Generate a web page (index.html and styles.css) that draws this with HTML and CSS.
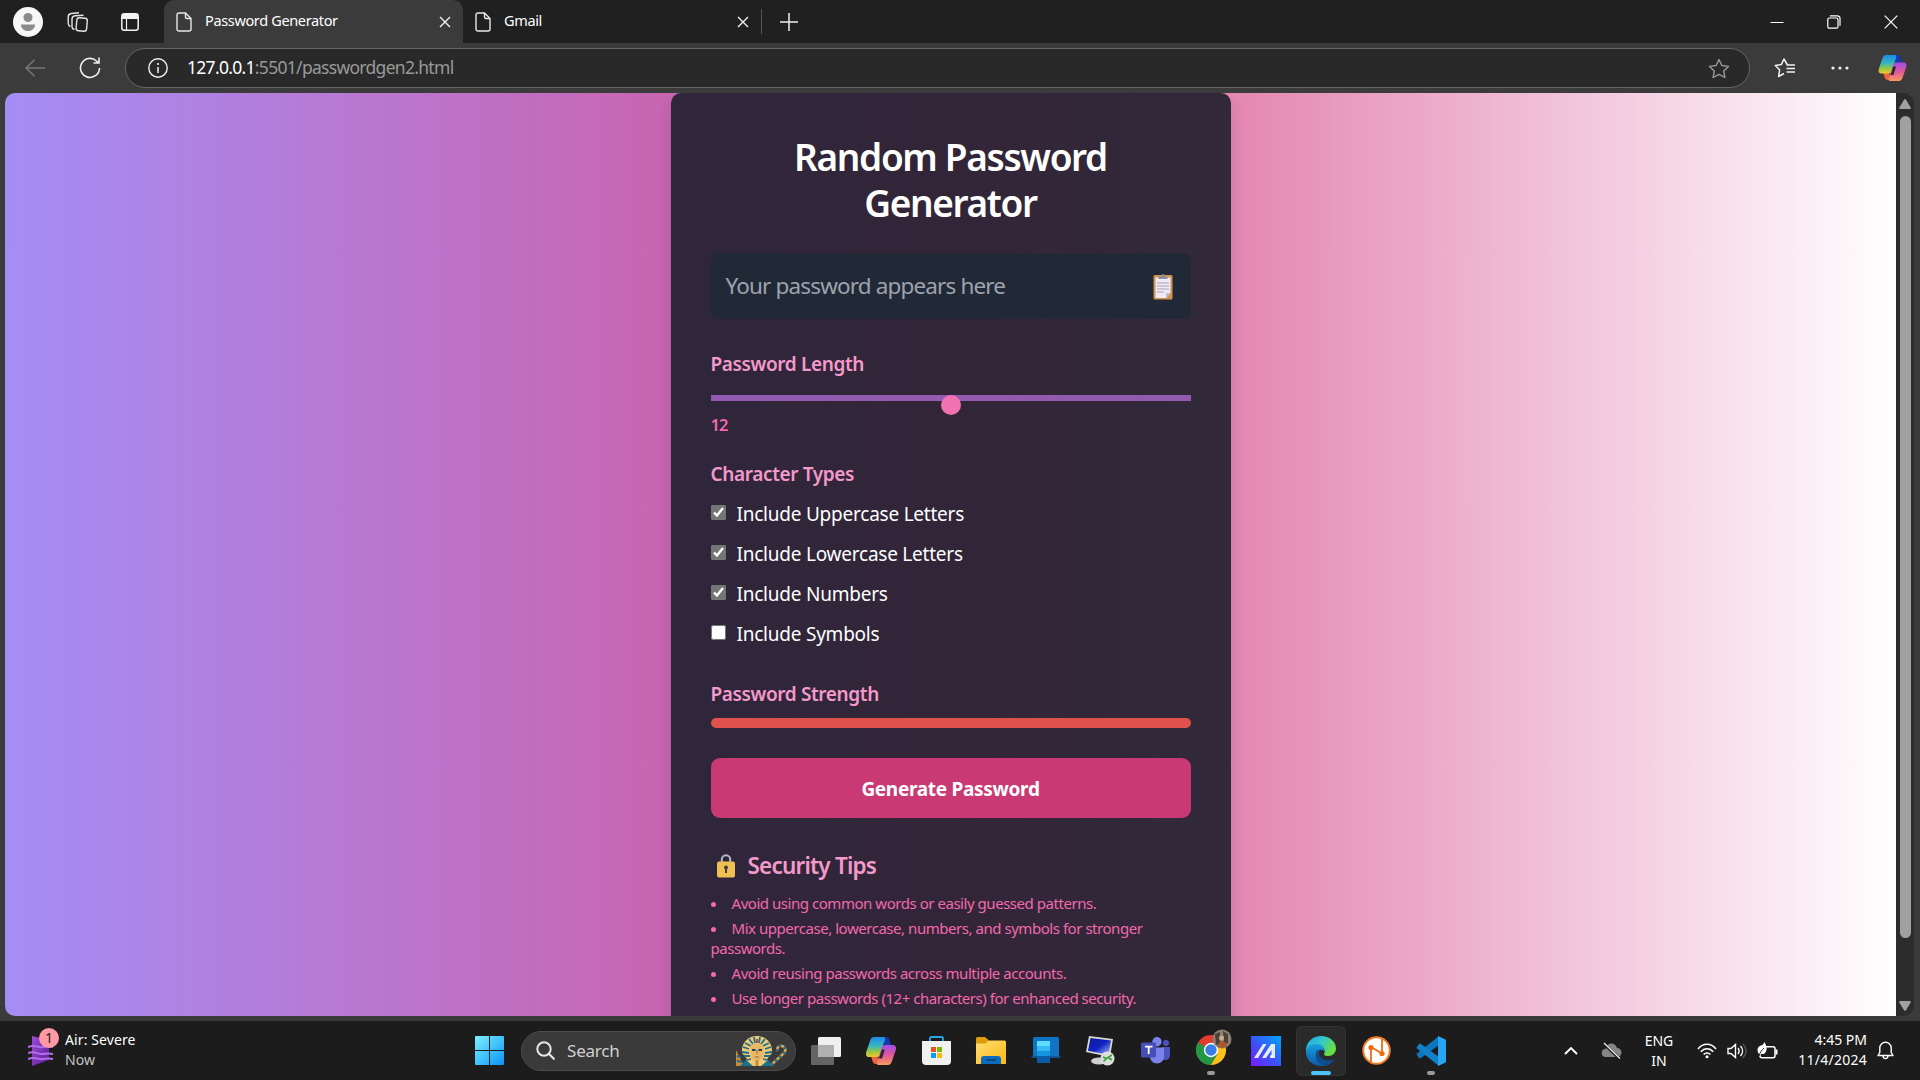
FILE: index.html
```html
<!DOCTYPE html>
<html lang="en">
<head>
<meta charset="utf-8">
<title>Password Generator</title>
<link rel="stylesheet" href="styles.css">
</head>
<body>
<svg class="defs" width="0" height="0">
  <defs>
    <linearGradient id="cpA" x1="0" y1="0" x2="0" y2="1"><stop offset="0" stop-color="#1c8be8"/><stop offset=".45" stop-color="#38b6c0"/><stop offset=".75" stop-color="#9cc93a"/><stop offset="1" stop-color="#f5c52c"/></linearGradient>
    <linearGradient id="cpB" x1="0" y1="0" x2="0" y2="1"><stop offset="0" stop-color="#a24de8"/><stop offset=".5" stop-color="#e0569c"/><stop offset="1" stop-color="#fb9a5a"/></linearGradient>
    <linearGradient id="win" x1="0" y1="0" x2="1" y2="1"><stop offset="0" stop-color="#7cf0ff"/><stop offset="1" stop-color="#0a94f8"/></linearGradient>
    <linearGradient id="fold" x1="0" y1="0" x2="1" y2="1"><stop offset="0" stop-color="#ffdf72"/><stop offset="1" stop-color="#fdb813"/></linearGradient>
    <linearGradient id="edgeA" x1="0" y1="0" x2="1" y2=".5"><stop offset="0" stop-color="#1ba5e8"/><stop offset=".5" stop-color="#32c6d0"/><stop offset="1" stop-color="#66e040"/></linearGradient>
    <linearGradient id="edgeB" x1="0" y1="0" x2="0" y2="1"><stop offset="0" stop-color="#1a9fe0"/><stop offset="1" stop-color="#0c59a4"/></linearGradient>
    <linearGradient id="asus" x1="0" y1="1" x2="1" y2="0"><stop offset="0" stop-color="#7a1cff"/><stop offset=".45" stop-color="#3c50f8"/><stop offset="1" stop-color="#00a8ff"/></linearGradient>
    <linearGradient id="screen" x1="0" y1="0" x2="1" y2="1"><stop offset="0" stop-color="#0a1e9c"/><stop offset=".5" stop-color="#1020c0"/><stop offset="1" stop-color="#a8c0f8"/></linearGradient>
    <linearGradient id="air" x1="0" y1="0" x2="1" y2="1"><stop offset="0" stop-color="#9a4bd8"/><stop offset="1" stop-color="#5c1c96"/></linearGradient>
    <symbol id="copilot" viewBox="0 0 30 28">
      <path d="M16 0h4c2 0 3 1 3.500 3l1.500 5h-6z" fill="#1438b8"/>
      <path d="M14 27h-4c-2 0-3-1-3.500-3L5 19h6z" fill="#f0643c"/>
      <path d="M8 0h9c2 0 2.500 1 2 2.500L14.500 17c-.7 2-1.500 3-3.500 3H3c-2.500 0-3.500-2-2.800-5L4 4C4.800 1.500 6 0 8 0z" fill="url(#cpA)"/>
      <path d="M22 28h-9c-2 0-2.500-1-2-2.500L15.500 11c.7-2 1.500-3 3.500-3h8c2.500 0 3.500 2 2.800 5L26 24c-.8 2.500-2 4-4 4z" fill="url(#cpB)"/>
      <path d="M15.800 12.500h3l-2.800 9h-3z" fill="#2c2430"/>
    </symbol>
    <symbol id="page" viewBox="0 0 16 20"><path d="M2.500 1h7L15 6.500V17a2 2 0 0 1-2 2H3a2 2 0 0 1-2-2V3a2 2 0 0 1 2-2zM9.500 1v4a1.500 1.500 0 0 0 1.500 1.500h4" fill="none" stroke="#e8e8e8" stroke-width="1.400"/></symbol>
    <symbol id="cross" viewBox="0 0 12 12"><path d="M1 1l10 10M11 1L1 11" fill="none" stroke="#f2f2f2" stroke-width="1.400"/></symbol>
  </defs>
</svg>

<header class="tabs">
  <div class="tab-tools">
    <svg width="30" height="30" viewBox="0 0 30 30"><circle cx="15" cy="15" r="15" fill="#f7f7f7"/><circle cx="15" cy="10.500" r="4.500" fill="#8d8b89"/><path d="M8 17.500h14c0 4-3 6.500-7 6.500s-7-2.500-7-6.500z" fill="#8d8b89"/></svg>
    <svg width="22" height="20" viewBox="0 0 22 20" fill="none" stroke="#e4e4e4" stroke-width="1.400"><rect x="9.500" y="6" width="10.500" height="13" rx="2.500" transform="rotate(5 15 12)"/><path d="M7.500 17.500C5.500 17 5 16 5 14.500V7c0-2 1-3 3-3.200l8.500-.6M3.500 14.500C2 14 1.200 13 1.200 11.500V5c0-2.200 1-3.200 3-3.500L12 .8"/></svg>
    <svg width="18" height="18" viewBox="0 0 18 18"><rect x=".8" y=".8" width="16.400" height="16.400" rx="2.500" fill="none" stroke="#f4f4f4" stroke-width="1.500"/><path d="M1 3a2 2 0 0 1 2-2h12a2 2 0 0 1 2 2v3H1z" fill="#f4f4f4"/><path d="M5.500 5v12" stroke="#f4f4f4" stroke-width="1.200"/></svg>
  </div>
  <div class="tab tab-active">
    <svg width="16" height="20"><use href="#page"/></svg><span>Password Generator</span><svg width="12" height="12"><use href="#cross"/></svg>
  </div>
  <div class="tab">
    <svg width="16" height="20"><use href="#page"/></svg><span>Gmail</span><svg width="12" height="12"><use href="#cross"/></svg>
  </div>
  <div class="new-tab"><svg width="18" height="18" viewBox="0 0 18 18"><path d="M9 0v18M0 9h18" stroke="#f0f0f0" stroke-width="1.500"/></svg></div>
  <div class="window-controls">
    <svg width="14" height="14" viewBox="0 0 14 14"><path d="M.5 7.500h13" stroke="#fff"/></svg>
    <svg width="14" height="14" viewBox="0 0 14 14" fill="none" stroke="#fff" stroke-width="1.200"><rect x=".8" y="3" width="10.200" height="10.200" rx="1.500"/><path d="M3 .8h7.500a2.500 2.500 0 0 1 2.500 2.500v7.500"/></svg>
    <svg width="14" height="14" viewBox="0 0 14 14"><path d="M.7.7l12.600 12.600M13.300.7L.7 13.300" stroke="#fff" stroke-width="1.200"/></svg>
  </div>
</header>

<nav class="toolbar">
  <svg class="back" width="20" height="18" viewBox="0 0 20 18"><path d="M20 9H1M9.500.7L1 9l8.500 8.300" fill="none" stroke="#777" stroke-width="1.500"/></svg>
  <svg class="reload" width="22" height="22" viewBox="0 0 22 22"><path d="M20.500 11A9.500 9.500 0 1 1 17.500 4l2 2M20 .5V6h-5.500" fill="none" stroke="#f0f0f0" stroke-width="1.600"/></svg>
  <div class="address">
    <svg width="20" height="20" viewBox="0 0 20 20"><circle cx="10" cy="10" r="9.200" fill="none" stroke="#f0f0f0" stroke-width="1.400"/><path d="M10 9v6" stroke="#f0f0f0" stroke-width="1.500"/><circle cx="10" cy="6" r="1.100" fill="#f0f0f0"/></svg>
    <div class="url">127.0.0.1<span>:5501/passwordgen2.html</span></div>
    <svg width="22" height="21" viewBox="0 0 22 21"><path d="M11 1.500l2.900 6 6.600.9-4.800 4.600 1.200 6.500L11 16.400l-5.900 3.100L6.300 13 1.500 8.400l6.600-.9z" fill="none" stroke="#999" stroke-width="1.400" stroke-linejoin="round"/></svg>
  </div>
  <div class="toolbar-end">
    <svg width="22" height="20" viewBox="0 0 22 20"><path d="M13.500 7L10 1 7.300 6.600l-6 .9 4.300 4.300L4.600 18.500l5.400-3M13.500 7l3 0M12.500 10.500H21M12.500 7H21M12.500 14H21" fill="none" stroke="#f2f2f2" stroke-width="1.500" stroke-linejoin="round"/></svg>
    <svg width="18" height="4" viewBox="0 0 18 4" fill="#f2f2f2"><circle cx="2" cy="2" r="1.600"/><circle cx="9" cy="2" r="1.600"/><circle cx="16" cy="2" r="1.600"/></svg>
    <svg width="29" height="26"><use href="#copilot"/></svg>
  </div>
</nav>

<div class="viewport">
  <main class="page">
    <section class="card">
      <h1>Random Password Generator</h1>
      <div class="output"><span>Your password appears here</span>
        <svg width="20" height="26" viewBox="0 0 20 26"><rect x=".5" y="1" width="19" height="24.500" rx="1.500" fill="#cf934e"/><path d="M2.500 3.500h15V19l-4.500 5H2.500z" fill="#f0eaf6"/><path d="M17.500 19H13v5z" fill="#c5bdd0"/><path d="M5.500 5V2.500h2.500C8 .8 8.800.3 10 .3s2 .5 2 2.200h2.500V5z" fill="#8f8d96"/><path d="M4 9h12M4 12h12M4 15h12M4 18h7" stroke="#aaa4b2" stroke-width="1.100"/></svg>
      </div>
      <div class="label length-label">Password Length</div>
      <div class="slider"><div class="thumb"></div></div>
      <div class="length-value">12</div>
      <div class="label types-label">Character Types</div>
      <div class="options">
        <label><input type="checkbox" checked>Include Uppercase Letters</label>
        <label><input type="checkbox" checked>Include Lowercase Letters</label>
        <label><input type="checkbox" checked>Include Numbers</label>
        <label><input type="checkbox">Include Symbols</label>
      </div>
      <div class="label strength-label">Password Strength</div>
      <div class="strength"></div>
      <button class="generate">Generate Password</button>
      <h2><svg width="20" height="24" viewBox="0 0 20 24"><path d="M5.800 9V5.500a4.200 4.200 0 0 1 8.400 0V9" fill="none" stroke="#b9b7c2" stroke-width="2"/><rect x="1" y="7.500" width="18" height="16" rx="2" fill="#f0c052"/><circle cx="10" cy="13.500" r="2" fill="#44364a"/><path d="M10 14v5" stroke="#44364a" stroke-width="2"/></svg><span>Security Tips</span></h2>
      <ul class="tips">
        <li>Avoid using common words or easily guessed patterns.</li>
        <li>Mix uppercase, lowercase, numbers, and symbols for stronger passwords.</li>
        <li>Avoid reusing passwords across multiple accounts.</li>
        <li>Use longer passwords (12+ characters) for enhanced security.</li>
      </ul>
    </section>
  </main>
  <div class="scrollbar">
    <svg width="12" height="10" viewBox="0 0 12 10"><path d="M5 .8a1.200 1.200 0 0 1 2 0l4.700 7.700a1 1 0 0 1-.9 1.500H1.200a1 1 0 0 1-.9-1.500z" fill="#a0a0a0"/></svg>
    <div class="scroll-thumb"></div>
    <svg width="12" height="10" viewBox="0 0 12 10"><path d="M5 9.200a1.200 1.200 0 0 0 2 0l4.700-7.700A1 1 0 0 0 10.800 0H1.200a1 1 0 0 0-.9 1.500z" fill="#a0a0a0"/></svg>
  </div>
</div>

<footer class="taskbar">
  <div class="weather">
    <div class="weather-icon">
      <svg width="26" height="32" viewBox="0 0 26 32"><path d="M4 1l17 4v20L4 31z" fill="url(#air)"/><path d="M0 12c7-3 10 1 15 0s6-1 10 0M0 18c7-3 10 2 15 1s6-1 10 0M0 24c7-3 10 1 15 0s6-1 10 0" fill="none" stroke="#b070e8" stroke-width="2"/></svg>
      <span class="badge">1</span>
    </div>
    <div class="weather-text"><div>Air: Severe</div><div class="muted">Now</div></div>
  </div>
  <div class="apps">
    <div class="start"><svg width="29" height="29" viewBox="0 0 29 29"><path d="M1 0h13v14H0V1a1 1 0 0 1 1-1zM15 0h13a1 1 0 0 1 1 1v13H15zM0 15h14v14H1a1 1 0 0 1-1-1zM15 15h14v13a1 1 0 0 1-1 1H15z" fill="url(#win)"/></svg></div>
    <div class="search">
      <svg width="19" height="19" viewBox="0 0 19 19"><circle cx="8" cy="8" r="6.700" fill="none" stroke="#e6e6e6" stroke-width="2"/><path d="M12.800 12.800l5 5" stroke="#e6e6e6" stroke-width="2.200" stroke-linecap="round"/></svg>
      <span>Search</span>
      <svg width="52" height="34" viewBox="0 0 52 34">
        <path d="M1 32V16l8 16z" fill="#c98a3c"/><path d="M2 22l4 1M2 27l6 1" stroke="#1b6a86" stroke-width="2"/>
        <path d="M9 32L12 25 7 19c-1-9 5-17 15-17s16 8 15 17l-5 6 3 7z" fill="#f0ca74"/>
        <path d="M8 13l6 2M7 18l7 1M9 22l6 0M12 26l4-1M10 9l6 3M36 13l-6 2M37 18l-7 1M35 22l-6 0M32 26l-4-1M34 9l-6 3M14 5l4 5M30 5l-4 5M19 3l1 6M25 3l-1 6" stroke="#1b7090" stroke-width="1.800"/>
        <path d="M5 32l6-6 7 6zM26 32l7-6 6 6z" fill="#1b7090"/>
        <path d="M15.500 12c4-3 9-3 13 0v8c0 4-3 7-6.500 7s-6.500-3-6.500-7z" fill="#e6b865"/><path d="M17 16h3.500M23.500 16H27" stroke="#19465c" stroke-width="1.800"/><path d="M22 16v4M20 23h4" stroke="#9a6428"/><path d="M20.500 26h3v6h-3z" fill="#c98a3c"/><path d="M21 5h2v4h-2z" fill="#c6452f"/>
        <path d="M36 31l12-11c5-4 1-9-3-8-3 .8-3 3-2 5" fill="none" stroke="#d9a650" stroke-width="2.600"/><path d="M36 31l12-11c5-4 1-9-3-8-3 .8-3 3-2 5" fill="none" stroke="#1b6a86" stroke-width="2.600" stroke-dasharray="2.500 3"/>
      </svg>
    </div>
    <div class="app"><svg width="30" height="28" viewBox="0 0 30 28"><rect y="8" width="23" height="20" rx="1.500" fill="#646464"/><rect x="7" width="23" height="20" rx="1.500" fill="#f0f0f0"/><path d="M7 8h16v12H8.500A1.500 1.500 0 0 1 7 18.500z" fill="#b0b0b0"/></svg></div>
    <div class="app"><svg width="30" height="28"><use href="#copilot"/></svg></div>
    <div class="app"><svg width="29" height="29" viewBox="0 0 29 29"><path d="M8 6V2.500C8 1.500 8.500 1 9.500 1h10c1 0 1.500.5 1.500 1.500V6" fill="none" stroke="#28a8ea" stroke-width="1.800"/><path d="M0 5h29v20a4 4 0 0 1-4 4H4a4 4 0 0 1-4-4z" fill="#f1f1f1"/><path d="M9 11h5v5H9z" fill="#f25022"/><path d="M15 11h5v5h-5z" fill="#7fba00"/><path d="M9 17h5v5H9z" fill="#00a4ef"/><path d="M15 17h5v5h-5z" fill="#ffb900"/></svg></div>
    <div class="app"><svg width="30" height="27" viewBox="0 0 30 27"><path d="M0 1.500A1.500 1.500 0 0 1 1.500 0H9l4 3.500V9H0z" fill="#e09c0a"/><path d="M0 6.500h9.500L13 3.500h15.500A1.500 1.500 0 0 1 30 5v22H0z" fill="url(#fold)"/><path d="M5 27v-5a3 3 0 0 1 3-3h14a3 3 0 0 1 3 3v5z" fill="#0f6cbd"/><path d="M10 23h10" stroke="#0a4a88" stroke-width="2"/></svg></div>
    <div class="app"><svg width="30" height="27" viewBox="0 0 30 27"><rect x="2" y="0" width="26" height="20" rx="1.500" fill="#1173c4"/><path d="M0 19h30l-2 2H2z" fill="#0d5798"/><path d="M6 4h13v22H6z" fill="#0a5ca8"/><path d="M6 4h13v5H6z" fill="#5edcff"/><path d="M6 9h13v5H6z" fill="#35b9f1"/><path d="M6 14h13v5H6z" fill="#1593dc"/></svg></div>
    <div class="app"><svg width="30" height="30" viewBox="0 0 30 30"><ellipse cx="13" cy="25" rx="8" ry="3.500" fill="#d0d0d0"/><path d="M3 0l24 3-3 18L0 16z" fill="#d9d9d0"/><path d="M4.500 2l20.500 2.500-2.500 14.300L2 14.700z" fill="url(#screen)"/><circle cx="21.500" cy="22.500" r="7" fill="#dedede"/><path d="M17 21l3.500 1.500-3 3M26 19l-4 2.500 4 2.500" fill="none" stroke="#37a23a" stroke-width="1.700"/></svg></div>
    <div class="app"><svg width="30" height="27" viewBox="0 0 30 27"><circle cx="25" cy="6" r="3" fill="#4b53bc"/><path d="M21 10h8v8c0 3-2 5-5 5h-3z" fill="#4b53bc"/><circle cx="16" cy="4.700" r="4.700" fill="#7b83eb"/><path d="M9 10.500h14v9c0 4-3 7-7 7s-7-3-7-7z" fill="#7b83eb"/><rect y="5.500" width="15" height="15" rx="1.500" fill="#464eb8"/><path d="M4 9.700h7.500M7.700 9.700V17" stroke="#fff" stroke-width="1.800"/></svg></div>
    <div class="app running"><svg class="chrome" width="38" height="38" viewBox="0 0 38 38"><circle cx="17" cy="21" r="15" fill="#e33b2e"/><path d="M17 21L4 13.500A15 15 0 0 0 17 36l6.500-11z" fill="#229847"/><path d="M17 14h13.300A15 15 0 0 1 17 36l6.500-11z" fill="#fbc116"/><circle cx="17" cy="21" r="7.200" fill="#fff"/><circle cx="17" cy="21" r="5.700" fill="#3a7de8"/><circle cx="28" cy="10" r="9.500" fill="#8c8272"/><path d="M21 5l5-2v12l-4 1zM29 2l5 3v9l-4 1z" fill="#4b4139"/><circle cx="27.500" cy="9" r="2.500" fill="#c3ad94"/><path d="M24 18c0-4 2-6 4-6s5 2 5 5l-4 2z" fill="#ab562c"/></svg></div>
    <div class="app"><svg width="30" height="30" viewBox="0 0 30 30"><path d="M0 0h30v30H0z" fill="url(#asus)"/><path d="M3 22L12 8h3.500L7 22zM11 22l9-14h4v14h-3.500V14L15 22z" fill="#e4ecff"/><circle cx="20.500" cy="20.500" r="1.500" fill="#fff"/></svg></div>
    <div class="app active"><svg width="30" height="30" viewBox="0 0 30 30"><path d="M0 17C-1 7 6 0 15 0c8.500 0 15 5.500 15 12.500 0 4.500-3.500 7.500-7.500 7.500-3.500 0-5-1.200-4.500-2.200 2.500-3-.5-7.800-6-7.800C6 10 1 13 0 17z" fill="url(#edgeA)"/><path d="M0 17C0 11 5 8 10.500 8c6 0 9 4 8 8-1-2-3-2.500-5-2-3 1-4 5-2 9 2 4 6 6.500 9.500 6.500C11 32 1 27 0 17z" fill="url(#edgeB)"/><path d="M10 16c-2 8 3 13.500 11 13.500 3-1 5.500-3.500 7.500-6.500-5 2.500-12.500 1.500-15-3.500-.8-1.700-.5-3.500.5-5.500-2 0-3.500.7-4 2z" fill="#0f4e8c"/></svg></div>
    <div class="app"><svg width="29" height="29" viewBox="0 0 29 29"><circle cx="14.500" cy="14.500" r="13.300" fill="#fff" stroke="#f47b28" stroke-width="2"/><path d="M9 26V11l11 6.500V3" fill="none" stroke="#f26a0d" stroke-width="1.800"/><circle cx="9" cy="11.500" r="2.600" fill="#f26a0d"/><circle cx="20" cy="17.500" r="2.600" fill="#f26a0d"/></svg></div>
    <div class="app running"><svg width="30" height="30" viewBox="0 0 30 30"><path d="M1 19l2 3c.6.500 1.300.5 2 0L23 9V0L1 17.500c-.6.500-.6 1 0 1.500z" fill="#0b76bd"/><path d="M1 11l2-3c.6-.5 1.300-.5 2 0L23 21v9L1 12.500c-.6-.5-.6-1 0-1.500z" fill="#1180c8"/><path d="M22 0l7 3.200c.6.300 1 .8 1 1.500v20.600c0 .7-.4 1.200-1 1.500L22 30z" fill="#27a4f2"/></svg></div>
  </div>
  <div class="tray">
    <svg class="chev" width="14" height="9" viewBox="0 0 14 9"><path d="M1 8l6-6 6 6" fill="none" stroke="#fff" stroke-width="1.900"/></svg>
    <svg class="cloud" width="21" height="17" viewBox="0 0 21 17"><path d="M5 15a4 4 0 0 1-.5-8C5.500 3 8 1.500 10.500 1.500S15 3 16 6a4.500 4.500 0 0 1 0 9z" fill="#858585"/><path d="M2 1l16.500 15.500" stroke="#1c1c1c" stroke-width="3"/><path d="M3 1l16 15.500" stroke="#eee" stroke-width="1.300"/></svg>
    <div class="lang"><div>ENG</div><div>IN</div></div>
    <svg class="wifi" width="20" height="16" viewBox="0 0 20 16" fill="none" stroke="#fff" stroke-width="1.500"><path d="M1 6C6-.2 14-.2 19 6M3.800 8.800c3.500-4.200 9-4.200 12.400 0M6.600 11.600c2-2.300 4.900-2.300 6.800 0"/><circle cx="10" cy="13.800" r="1.500" fill="#fff" stroke="none"/></svg>
    <svg class="sound" width="20" height="16" viewBox="0 0 20 16" fill="none" stroke="#fff" stroke-width="1.400"><path d="M1 5.500h3L8.500 1.500v13L4 10.500H1zM11 5c1.500 2 1.500 4 0 6M13.500 3c2.700 3 2.700 7 0 10"/><path d="M16 1c4 4.500 4 9.500 0 14" stroke="#555"/></svg>
    <svg class="battery" width="21" height="17" viewBox="0 0 21 17"><path d="M9 4.700h7a2 2 0 0 1 2 2v7a2 2 0 0 1-2 2H5a2 2 0 0 1-2-2V12" fill="none" stroke="#fff" stroke-width="1.500"/><path d="M18.500 7.500h2v5h-2z" fill="#fff"/><path d="M7 0c3 3 4 9 0 12H2C-1 8 1 4 4 3.500 6 3 7 2 7 0z" fill="#fff"/><path d="M2 14c1-4 3-6 5-8" stroke="#222" fill="none"/></svg>
    <div class="clock"><div>4:45 PM</div><div class="date">11/4/2024</div></div>
    <svg class="bell" width="17" height="19" viewBox="0 0 17 19"><path d="M1 14.500l1.800-3V7a5.700 5.700 0 0 1 11.400 0v4.500l1.800 3zM6 15c.5 3.500 4.500 3.500 5 0" fill="none" stroke="#fff" stroke-width="1.400" stroke-linejoin="round"/></svg>
  </div>
</footer>
</body>
</html>
```
FILE: styles.css
```css
* { box-sizing: border-box; }
body {
  margin: 0;
  width: 1920px;
  height: 1080px;
  overflow: hidden;
  display: flex;
  flex-direction: column;
  background: #3b3b3b;
  color: #fff;
  font-family: "Noto Sans", "Open Sans", sans-serif;
}
svg { display: block; flex: none; }
.defs { position: absolute; }

.tabs { height: 43px; background: #202020; display: flex; align-items: center; font-size: 14.500px; letter-spacing: -.35px; }
.tab-tools { width: 164px; padding-left: 13px; display: flex; align-items: center; gap: 24px; }
.tab-tools svg:last-child { margin-left: 8px; }
.tab { width: 298px; height: 43px; padding: 0 12px; display: flex; align-items: center; }
.tab span { flex: 1; padding-left: 13px; padding-bottom: 3px; }
.tab-active { width: 299px; background: #3b3b3b; border-radius: 10px 10px 0 0; }
.new-tab { height: 25px; padding-left: 18px; border-left: 1px solid #555; display: flex; align-items: center; }
.window-controls { margin-left: auto; padding-right: 22px; display: flex; gap: 43px; }

.toolbar { height: 50px; display: flex; align-items: center; flex: none; }
.back { margin-left: 25px; }
.reload { margin-left: 34px; }
.address { width: 1625px; height: 40px; margin-left: 24px; padding: 0 19px 0 22px; border: 1px solid #666; border-radius: 20px; background: #292929; display: flex; align-items: center; }
.url { flex: 1; padding: 0 0 2px 19px; font-size: 17.500px; letter-spacing: -.7px; }
.url span { color: #999; }
.toolbar-end { padding-left: 24px; display: flex; align-items: center; gap: 35px; }
.toolbar-end svg:last-child { margin-left: -6px; }

.viewport { height: 923px; width: 1909px; margin-left: 5px; display: flex; border-radius: 10px; overflow: hidden; flex: none; }
.page { width: 1891px; height: 923px; overflow: hidden; display: flex; justify-content: center; align-items: flex-start; background: linear-gradient(to right, #a58df6, #d85493 50%, #fff); }
.card { width: 560px; height: 1000px; padding: 40px; border-radius: 10px; background: linear-gradient(to right, #2f263b, #332538 50%, #31293a); box-shadow: 0 8px 16px rgba(0, 0, 0, .12); }
h1 { margin: 0; padding-top: 1px; font-size: 37px; line-height: 46px; font-weight: 600; letter-spacing: -1.350px; text-align: center; }
.output { margin-top: 27px; height: 66px; padding: 0 18px 0 15px; border-radius: 8px; background: #222936; color: #9ca3af; font-size: 22.500px; letter-spacing: -.85px; display: flex; align-items: center; justify-content: space-between; }
.output span { padding-bottom: 2px; }
.output svg { margin-top: 2px; }
.label { color: #f49acb; font-size: 19px; font-weight: 600; line-height: 28px; letter-spacing: -.37px; }
.length-label { margin-top: 31px; }
.slider { height: 6px; margin-top: 17px; background: #935bb0; display: flex; justify-content: center; }
.thumb { width: 20px; height: 20px; border-radius: 50%; background: #f072b0; flex: none; }
.length-value { margin-top: 12px; color: #f368ae; font-size: 16.500px; font-weight: 600; line-height: 24px; letter-spacing: -1px; }
.types-label { margin-top: 23px; }
.options { margin-top: 6px; display: flex; flex-direction: column; font-size: 19px; letter-spacing: -.23px; }
.options label { height: 40px; display: flex; align-items: center; }
.options input { width: 15px; height: 15px; margin: 0 11px 3px 0; accent-color: #757575; }
.strength-label { margin-top: 26px; }
.strength { height: 10px; margin-top: 10px; border-radius: 5px; background: #de524b; }
.generate { display: block; width: 100%; height: 60px; margin-top: 30px; padding: 2px 0 0; border: 0; border-radius: 9px; background: #c93a75; color: #fff; font: 700 19px "Noto Sans", sans-serif; letter-spacing: -.3px; }
h2 { margin: 30px 0 0; padding-left: 5px; height: 36px; display: flex; align-items: center; gap: 12px; color: #f49acb; font-size: 22.500px; font-weight: 600; letter-spacing: -.8px; }
h2 span { padding-bottom: 2px; }
.tips { margin: 9px 0 0; padding: 0; list-style-position: inside; color: #f368ae; font-size: 15px; line-height: 20px; letter-spacing: -.46px; }
.tips li { margin-bottom: 5px; }

.scrollbar { width: 18px; background: #2c2c2c; display: flex; flex-direction: column; align-items: center; padding: 6px 0 5px; }
.scroll-thumb { width: 11px; height: 822px; margin-top: 7px; margin-bottom: auto; border-radius: 6px; background: #a0a0a0; }

.taskbar { height: 59px; margin-top: 5px; background: #1c1c1c; display: flex; align-items: center; font-size: 14px; }
.weather { width: 462px; padding-left: 28px; display: flex; align-items: center; gap: 11px; line-height: 20px; }
.weather-text { padding-bottom: 2px; letter-spacing: .1px; }
.weather-icon { position: relative; }
.badge { position: absolute; left: 11px; top: -7px; width: 20px; height: 20px; border-radius: 50%; background: #ff99a4; color: #222; text-align: center; line-height: 20px; }
.muted { color: #c4c4c4; }
.apps { display: flex; align-items: center; }
.start { width: 59px; padding-left: 13px; }
.search { width: 275px; height: 40px; padding: 0 8px 0 14px; border: 1px solid #4c4c4c; border-radius: 20px; background: #3a3a3a; display: flex; align-items: center; font-size: 17px; letter-spacing: -.2px; color: #d0d0d0; margin-right: 5px; }
.search span { flex: 1; padding-left: 12px; }
.app { width: 50px; height: 50px; margin-right: 5px; display: flex; justify-content: center; align-items: center; position: relative; flex: none; border-radius: 6px; }
.chrome { margin: -6px -4px 0 0; }
.active { background: #2a2a2a; box-shadow: inset 0 0 0 1px #333; }
.running::after, .active::after { content: ""; position: absolute; bottom: 1px; left: 21px; width: 8px; height: 4px; border-radius: 2px; background: #9a9a9a; }
.active::after { left: 15px; width: 20px; background: #4cc2ff; }
.tray { margin-left: auto; padding-right: 26px; display: flex; align-items: center; line-height: 20px; }
.cloud { margin-left: 23px; }
.lang { width: 40px; margin-left: 17px; text-align: center; }
.wifi { margin-left: 18px; }
.sound { margin-left: 10px; }
.battery { margin-left: 10px; }
.clock { width: 89px; padding-bottom: 2px; text-align: right; }
.date { letter-spacing: .25px; }
.bell { margin-left: 10px; }
```
